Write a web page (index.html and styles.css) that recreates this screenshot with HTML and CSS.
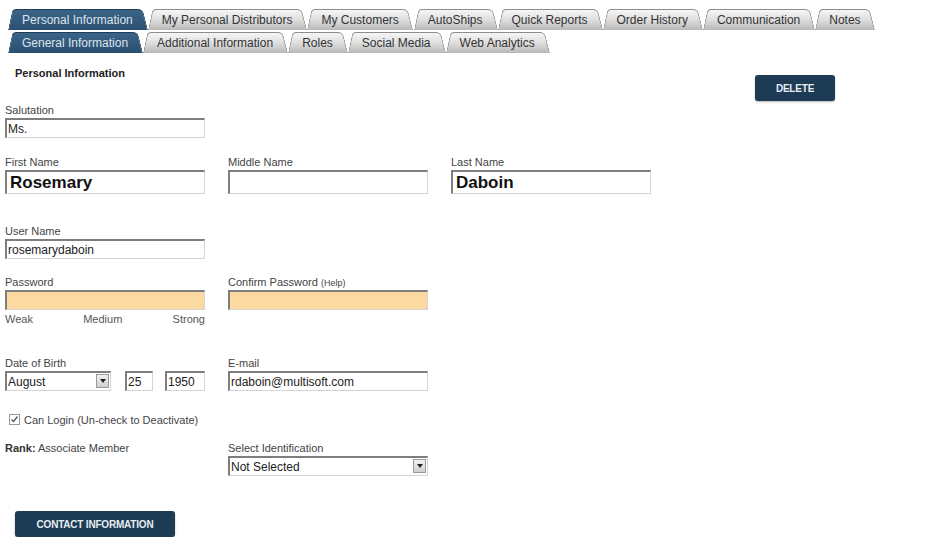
FILE: index.html
```html
<!DOCTYPE html>
<html lang="en">
<head>
    <meta charset="UTF-8">
    <title>Personal Information</title>
    <link rel="stylesheet" href="styles.css">
</head>
<body>

    <!-- Main tabs -->
    <div class="tabs tabs-main">
        <span class="tab active">Personal Information</span>
        <span class="tab">My Personal Distributors</span>
        <span class="tab">My Customers</span>
        <span class="tab">AutoShips</span>
        <span class="tab">Quick Reports</span>
        <span class="tab">Order History</span>
        <span class="tab">Communication</span>
        <span class="tab">Notes</span>
    </div>

    <!-- Sub tabs -->
    <div class="tabs tabs-sub">
        <span class="tab active">General Information</span>
        <span class="tab">Additional Information</span>
        <span class="tab">Roles</span>
        <span class="tab">Social Media</span>
        <span class="tab">Web Analytics</span>
    </div>

    <div class="content">
        <div class="head-row">
            <h3>Personal Information</h3>
            <button class="btn btn-delete">DELETE</button>
        </div>

        <div class="row row-salutation">
            <div class="field">
                <label>Salutation</label>
                <div class="input">Ms.</div>
            </div>
        </div>

        <div class="row row-names">
            <div class="field">
                <label>First Name</label>
                <div class="input big">Rosemary</div>
            </div>
            <div class="field">
                <label>Middle Name</label>
                <div class="input big"></div>
            </div>
            <div class="field">
                <label>Last Name</label>
                <div class="input big">Daboin</div>
            </div>
        </div>

        <div class="row row-user">
            <div class="field">
                <label>User Name</label>
                <div class="input">rosemarydaboin</div>
            </div>
        </div>

        <div class="row row-password">
            <div class="field">
                <label>Password</label>
                <div class="input pw"></div>
                <div class="strength">
                    <span>Weak</span><span>Medium</span><span>Strong</span>
                </div>
            </div>
            <div class="field">
                <label>Confirm Password <small>(Help)</small></label>
                <div class="input pw"></div>
            </div>
        </div>

        <div class="row row-dob">
            <div class="field">
                <label>Date of Birth</label>
                <div class="dob">
                    <div class="input select month">August<span class="arrow"></span></div>
                    <div class="input day">25</div>
                    <div class="input year">1950</div>
                </div>
            </div>
            <div class="field">
                <label>E-mail</label>
                <div class="input">rdaboin@multisoft.com</div>
            </div>
        </div>

        <div class="check-row">
            <span class="checkbox">
                <svg width="9" height="9" viewBox="0 0 9 9"><path d="M1.5 4.5 L3.5 6.5 L7.5 1.5" fill="none" stroke="#555" stroke-width="1.3"/></svg>
            </span>
            Can Login (Un-check to Deactivate)
        </div>

        <div class="row row-rank">
            <div class="field rank">
                <b>Rank:</b> Associate Member
            </div>
            <div class="field">
                <label>Select Identification</label>
                <div class="input select">Not Selected<span class="arrow"></span></div>
            </div>
        </div>

        <button class="btn btn-contact">CONTACT INFORMATION</button>
    </div>

</body>
</html>
```

FILE: styles.css
```css
body {
    margin: 0;
    padding: 0;
    font-family: "Liberation Sans", Arial, sans-serif;
    font-size: 11px;
    color: #333;
    background-color: white;
}

/* Tabs: two skewed halves give the slanted sides */
.tabs {
    display: flex;
    padding-left: 8px;
    height: 21px;
}

.tabs-main {
    margin-top: 9px;
}

.tabs-sub {
    margin-top: 2px;
}

.tab {
    position: relative;
    z-index: 1;
    padding: 0 15px 0 14px;
    line-height: 23px;
    font-size: 12px;
    color: #333;
    white-space: nowrap;
}

.tab::before,
.tab::after {
    content: "";
    position: absolute;
    top: 0;
    bottom: 0;
    z-index: -1;
    border-top: 1px solid #8c8c8c;
    background: linear-gradient(#f6f6f6, #dedede 50%, #b8b8b8);
    transform-origin: bottom;
}

.tab::before {
    left: 0;
    right: 48%;
    border-left: 1px solid #8c8c8c;
    border-radius: 4px 0 0 0;
    transform: skewX(-12deg);
}

.tab::after {
    left: 48%;
    right: 0;
    border-right: 1px solid #8c8c8c;
    border-radius: 0 5px 0 0;
    transform: skewX(14deg);
}

.tab.active {
    color: #dce4ec;
    z-index: 2;
}

.tab.active::before,
.tab.active::after {
    border-color: #1f3d57;
    background: linear-gradient(#3b6488, #2a4f70);
}

/* Content */
.content {
    padding: 0 5px;
}

.head-row {
    display: flex;
    justify-content: space-between;
    align-items: flex-start;
    height: 34px;
    padding-top: 14px;
}

.head-row h3 {
    margin: 0 0 0 10px;
    font-size: 11px;
    color: #222;
}

.btn {
    background-color: #1d3b55;
    color: #e8edf2;
    border: none;
    border-radius: 3px;
    font-family: "Liberation Sans", Arial, sans-serif;
    font-weight: bold;
    font-size: 10px;
    letter-spacing: -0.2px;
    box-shadow: 0 1px 2px rgba(0, 0, 0, 0.3);
}

.btn-delete {
    width: 80px;
    height: 26px;
    margin: 8px 94px 0 0;
}

.btn-contact {
    width: 160px;
    height: 26px;
    margin: 35px 0 0 10px;
}

.row {
    display: flex;
    gap: 23px;
}

.field {
    width: 200px;
}

.field label {
    display: block;
    font-size: 11px;
    line-height: 15px;
    height: 15px;
    color: #444;
}

.field label small {
    font-size: 9px;
}

.input {
    box-sizing: border-box;
    width: 200px;
    height: 20px;
    border-top: 2px solid #7e7e7e;
    border-left: 2px solid #7e7e7e;
    border-right: 1px solid #d4d4d4;
    border-bottom: 1px solid #d4d4d4;
    padding: 1px 1px;
    font-size: 12px;
    line-height: 16px;
    color: #222;
    background-color: white;
    position: relative;
}

.input.big {
    height: 24px;
    font-size: 17px;
    font-weight: bold;
    line-height: 20px;
    padding-left: 3px;
    color: #111;
}

.input.pw {
    background-color: #fbd9a0;
}

.row-salutation {
    margin-top: 2px;
}

.row-names {
    margin-top: 17px;
}

.row-user {
    margin-top: 30px;
}

.row-password {
    margin-top: 16px;
}

.strength {
    display: flex;
    justify-content: space-between;
    margin-top: 3px;
    font-size: 11px;
    line-height: 13px;
    color: #555;
}

.row-dob {
    margin-top: 30px;
}

.dob {
    display: flex;
}

.input.month {
    width: 106px;
}

.input.day {
    width: 28px;
    margin-left: 14px;
}

.input.year {
    width: 40px;
    margin-left: 12px;
}

.select .arrow {
    position: absolute;
    right: 1px;
    top: 1px;
    width: 13px;
    height: 14px;
    box-sizing: border-box;
    background: linear-gradient(#f2f2f2, #cfcfcf);
    border: 1px solid #9a9a9a;
}

.select .arrow::after {
    content: "";
    position: absolute;
    left: 3px;
    top: 4px;
    border-left: 3px solid transparent;
    border-right: 3px solid transparent;
    border-top: 4px solid #222;
}

.check-row {
    display: flex;
    align-items: center;
    gap: 4px;
    height: 13px;
    margin: 22px 0 0 4px;
    font-size: 11px;
    color: #444;
}

.checkbox {
    width: 11px;
    height: 11px;
    box-sizing: border-box;
    border: 1px solid #999;
    display: flex;
    align-items: center;
    justify-content: center;
    background: white;
}

.row-rank {
    margin-top: 15px;
}

.rank {
    color: #444;
    line-height: 15px;
}

.rank b {
    color: #333;
}
```
